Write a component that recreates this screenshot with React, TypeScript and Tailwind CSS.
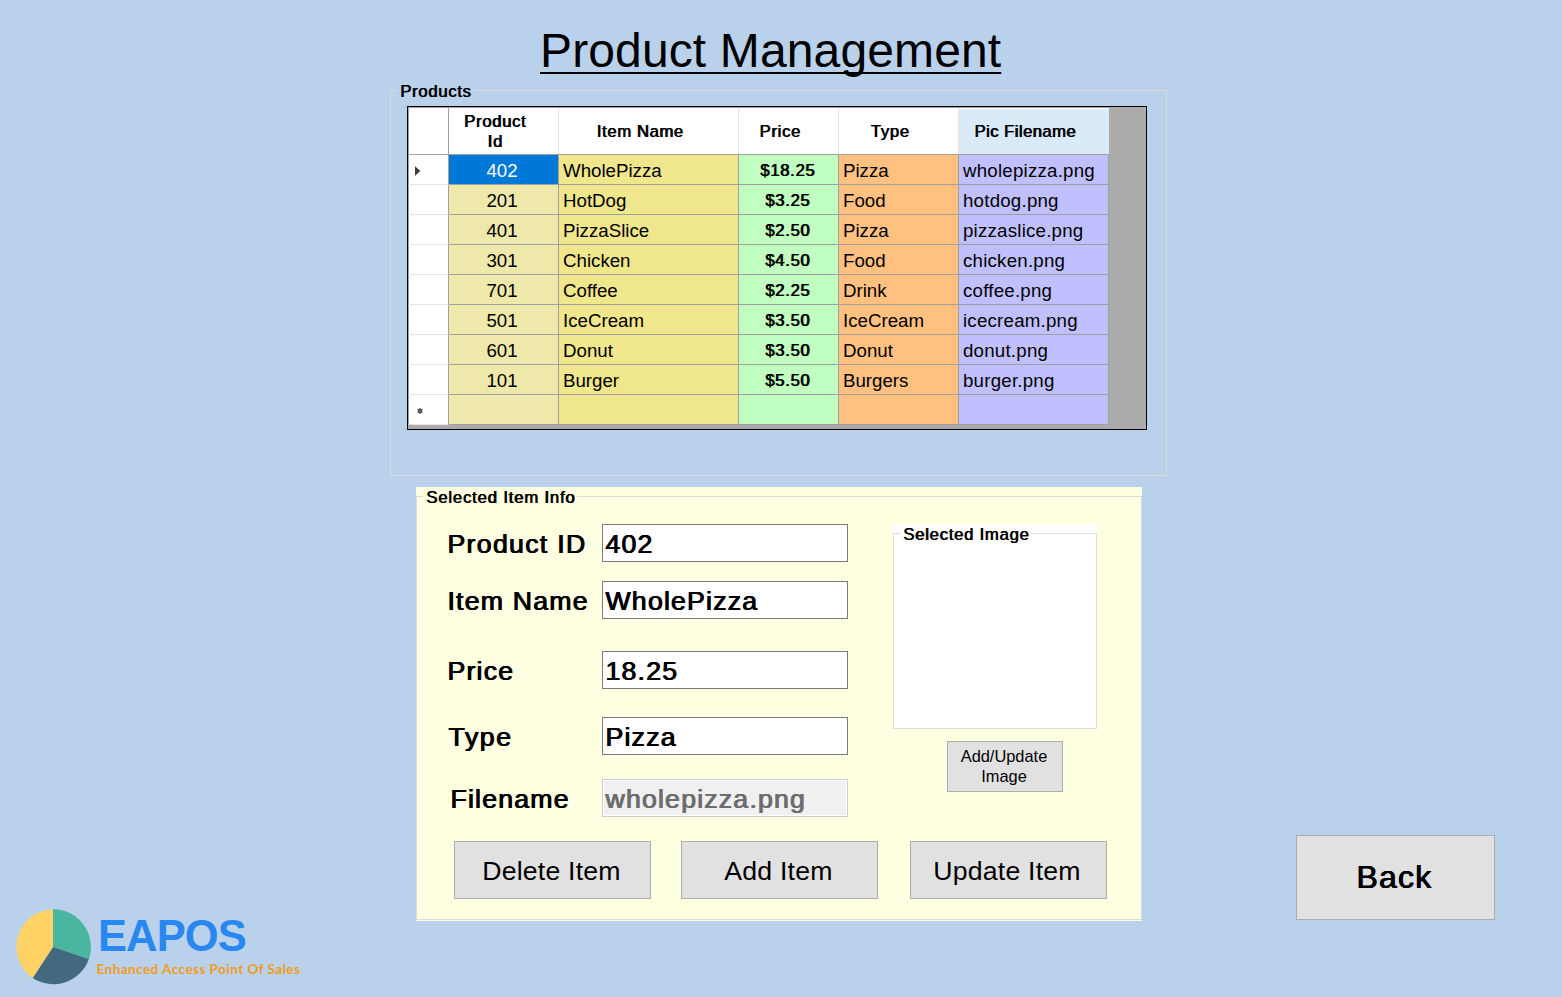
import React from "react";

type Product = { id: string; name: string; price: string; type: string; file: string };

const products: Product[] = [
  { id: "402", name: "WholePizza", price: "$18.25", type: "Pizza", file: "wholepizza.png" },
  { id: "201", name: "HotDog", price: "$3.25", type: "Food", file: "hotdog.png" },
  { id: "401", name: "PizzaSlice", price: "$2.50", type: "Pizza", file: "pizzaslice.png" },
  { id: "301", name: "Chicken", price: "$4.50", type: "Food", file: "chicken.png" },
  { id: "701", name: "Coffee", price: "$2.25", type: "Drink", file: "coffee.png" },
  { id: "501", name: "IceCream", price: "$3.50", type: "IceCream", file: "icecream.png" },
  { id: "601", name: "Donut", price: "$3.50", type: "Donut", file: "donut.png" },
  { id: "101", name: "Burger", price: "$5.50", type: "Burgers", file: "burger.png" },
];

const smallBold = "text-[16.67px] leading-5 tracking-[0.7px] [text-shadow:0.8px_0_currentColor]";
const largeBold = "text-[26.67px] leading-8 tracking-[1.2px] [text-shadow:0.5px_0_currentColor,1px_0_currentColor]";
const button = "flex items-center justify-center border border-[#adadad] bg-[#e1e1e1] text-center";
const columns = "grid grid-cols-[41px_110px_180px_100px_120px_150px]";

function Legend({ text, className }: { text: string; className: string }) {
  return <div className={`absolute left-[6px] pl-[3px] pr-[2px] whitespace-nowrap ${smallBold} ${className}`}>{text}</div>;
}

function HeaderCell({ text, className }: { text: string; className: string }) {
  return (
    <div className={`flex items-center justify-center border-r pt-[2px] text-center ${smallBold} ${className}`}>
      {text}
    </div>
  );
}

function Row({ product, selected, fresh }: { product?: Product; selected?: boolean; fresh?: boolean }) {
  const cell = "flex items-center border-r border-b border-[#a0a0a0] pt-[2px]";
  const body = "text-[18.7px] leading-6 pl-1";
  return (
    <div className={`${columns} h-[30px]`}>
      <div className="flex items-center border-r border-r-[#a0a0a0] border-b border-b-[#e5e5e5] border-l border-l-[#a0a0a0] bg-white">
        {selected && (
          <svg className="mt-[2px] ml-[6px]" width="6" height="10" viewBox="0 0 6 10">
            <path d="M0 0.3 5.4 5 0 9.7Z" fill="#3c3c3c" />
          </svg>
        )}
        {fresh && (
          <svg className="mt-[3px] ml-[8px]" width="6" height="6" viewBox="0 0 6 6">
            <circle cx="3" cy="3" r="2.4" fill="#444" />
            <path d="M3 0V6M0.3 1.2 5.7 4.8M0.3 4.8 5.7 1.2" stroke="#666" strokeWidth="1" />
          </svg>
        )}
      </div>
      <div className={`${cell} justify-center text-[18.7px] leading-6 pr-[3px] ${selected ? "bg-[#0078d7] text-white" : "bg-[#eee8aa]"}`}>
        {product?.id}
      </div>
      <div className={`${cell} ${body} bg-[#f0e68c]`}>{product?.name}</div>
      <div className={`${cell} ${smallBold} justify-center pr-[2px] bg-[#c0ffc0]`}>{product?.price}</div>
      <div className={`${cell} ${body} bg-[#ffc080]`}>{product?.type}</div>
      <div className={`${cell} ${body} tracking-[0.22px] bg-[#c0c0ff]`}>{product?.file}</div>
    </div>
  );
}

function Field({ label, value, className, labelClass, disabled }: { label: string; value: string; className: string; labelClass: string; disabled?: boolean }) {
  return (
    <div className={`flex h-[38px] items-center ${className}`}>
      <div className={`w-[155px] shrink-0 whitespace-nowrap pt-[2px] ${labelClass} ${largeBold}`}>{label}</div>
      <div
        className={`flex h-[38px] w-[246px] items-center border pl-[2px] pt-[2px] ${largeBold} ${
          disabled ? "border-[#cccccc] bg-[#f0f0f0] text-[#6d6d6d] shadow-[inset_0_0_0_1px_#ffffff]" : "border-[#7a7a7a] bg-white"
        }`}
      >
        {value}
      </div>
    </div>
  );
}

function ProductsGroup() {
  return (
    <section className="relative mt-[12px] h-[386px] w-[777px] border border-[#dcdcdc] pt-[15px] pl-[16px]">
      <Legend text="Products" className="-top-[9px] bg-[#b9d1ea]" />
      <div className="h-[324px] w-[740px] border border-black bg-[#ababab]">
        <div className="w-[701px] border-t border-[#a0a0a0]">
          <div className={`${columns} h-[47px] border-b border-[#a0a0a0] bg-white`}>
            <div className="border-r border-l border-[#a0a0a0]" />
            <HeaderCell text="Product Id" className="border-[#e5e5e5] pl-[12px] pr-[29px]" />
            <HeaderCell text="Item Name" className="border-[#e5e5e5] pr-[17px] tracking-[0.6px]!" />
            <HeaderCell text="Price" className="border-[#e5e5e5] pr-[17px]" />
            <HeaderCell text="Type" className="border-[#e5e5e5] pr-[17px]" />
            <HeaderCell text="Pic Filename" className="mt-px border-[#d9ebf9] bg-[#d9ebf9] pt-px! pr-[17px] tracking-[0.45px]!" />
          </div>
          {products.map((p, i) => (
            <Row key={p.id} product={p} selected={i === 0} />
          ))}
          <Row fresh />
        </div>
      </div>
    </section>
  );
}

function ItemInfoGroup() {
  return (
    <section className="mt-[11px] ml-[26px] h-[434px] w-[726px] bg-[#ffffe1] pt-[9px]">
      <div className="relative h-[424px] border border-[#dcdcdc]">
        <Legend text="Selected Item Info" className="-top-[9px] bg-[#ffffe1] tracking-[0.83px]!" />
        <div className="flex">
          <div className="w-[446px] pt-[27px] pl-[30px]">
            <Field label="Product ID" value="402" className="" labelClass="tracking-[1.3px]!" />
            <Field label="Item Name" value="WholePizza" className="mt-[19px]" labelClass="" />
            <Field label="Price" value="18.25" className="mt-[32px]" labelClass="" />
            <Field label="Type" value="Pizza" className="mt-[28px]" labelClass="pl-px tracking-[1.6px]!" />
            <Field label="Filename" value="wholepizza.png" className="mt-[24px]" labelClass="pl-[3px]" disabled />
          </div>
          <div className="flex flex-col pt-[27px] pl-[30px]">
            <div className="h-[205px] w-[204px] bg-white pt-[9px]">
              <div className="relative h-[196px] border border-[#dcdcdc]">
                <Legend text="Selected Image" className="-top-[9px] bg-white tracking-[0.75px]!" />
              </div>
            </div>
            <button className={`${button} mt-[12px] ml-[54px] h-[51px] w-[116px] pr-[2px] pb-[2px] text-[16.4px] leading-5`}>
              Add/Update
              <br />
              Image
            </button>
          </div>
        </div>
        <div className="mt-[24px] ml-[37px] flex text-[26.67px] leading-8 tracking-[0.2px]">
          <button className={`${button} h-[58px] w-[197px] pt-[2px] pr-[2px]`}>Delete Item</button>
          <button className={`${button} ml-[30px] h-[58px] w-[197px] pt-[2px] pr-[2px]`}>Add Item</button>
          <button className={`${button} ml-[32px] h-[58px] w-[197px] pt-[2px] pr-[3px]`}>Update Item</button>
        </div>
      </div>
    </section>
  );
}

function Logo() {
  return (
    <div className="mt-auto mb-[11px] ml-[15px] flex h-[78px]">
      <svg width="78" height="78" viewBox="0 0 78 78">
        <path d="M38 39V1.2A37.8 37.8 0 0 1 73.9 51Z" fill="#4ab6a0" />
        <path d="M38 39 73.9 51A37.8 37.8 0 0 1 17.6 70Z" fill="#42697f" />
        <path d="M38 39 17.6 70A37.8 37.8 0 0 1 38 1.2Z" fill="#ffd265" />
      </svg>
      <div className="flex flex-col whitespace-nowrap pl-[3px]">
        <div className="mt-[4px] ml-[2px] text-[43.5px] leading-[48px] font-bold tracking-[-0.9px] text-[#2987f0]">EAPOS</div>
        <div className="ml-[0.5px] font-['Lato','Open_Sans',sans-serif] text-[13.5px] leading-[18px] font-bold tracking-[0.46px] text-[#f39a1c]">
          Enhanced Access Point Of Sales
        </div>
      </div>
    </div>
  );
}

export default function App() {
  return (
    <main className="flex h-[997px] w-[1562px] overflow-hidden bg-[#b9d1ea] font-['Liberation_Sans',Arial,sans-serif] text-black">
      <aside className="flex w-[390px] shrink-0 flex-col">
        <Logo />
      </aside>
      <div className="w-[777px] shrink-0">
        <h1 className="mt-[24px] ml-[150px] h-[54px] w-[461px] whitespace-nowrap text-[48px] leading-[54px] tracking-[0.13px] underline decoration-2 underline-offset-[5px] [text-decoration-skip-ink:none]">
          Product Management
        </h1>
        <ProductsGroup />
        <ItemInfoGroup />
      </div>
      <div className="flex flex-1 flex-col justify-end pb-[77px] pl-[129px]">
        <button className={`${button} h-[85px] w-[199px] pr-[3px] pb-[2px] text-[32px] tracking-[1.2px] [text-shadow:0.5px_0_currentColor,1px_0_currentColor]`}>Back</button>
      </div>
    </main>
  );
}
